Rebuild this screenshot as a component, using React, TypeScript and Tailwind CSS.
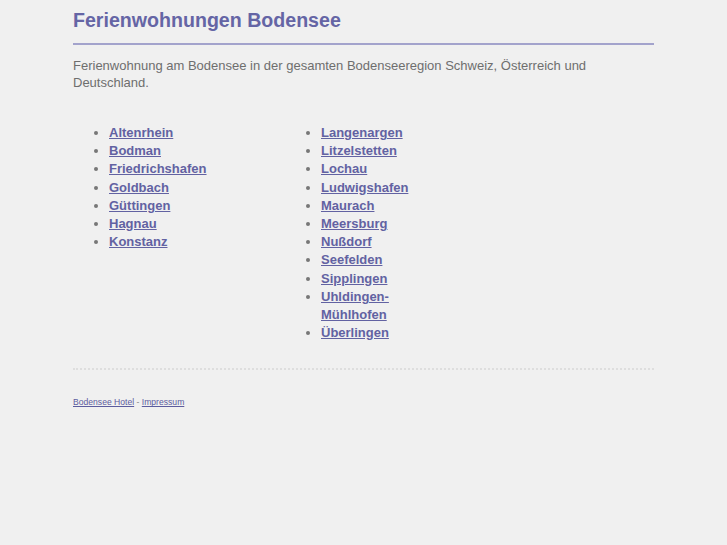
import React from "react";

const col1 = ["Altenrhein", "Bodman", "Friedrichshafen", "Goldbach", "Güttingen", "Hagnau", "Konstanz"];
const col2 = ["Langenargen", "Litzelstetten", "Lochau", "Ludwigshafen", "Maurach", "Meersburg", "Nußdorf", "Seefelden", "Sipplingen", "Uhldingen-Mühlhofen", "Überlingen"];

export default function App() {
  return (
    <div className="min-h-[545px] bg-[#f0f0f0] text-[#6e6e6e]" style={{ fontFamily: '"Liberation Sans", Arial, sans-serif' }}>
      <div className="ml-[73px] w-[581px] pt-[8px]">
        <h1 className="text-[19.6px] leading-[24px] font-bold text-[#6565a5] pb-[11px] border-b-2 border-[#a3a3cc]">
          Ferienwohnungen Bodensee
        </h1>
        <p className="mt-[12px] text-[13px] leading-[17px] text-[#6e6e6e]">
          Ferienwohnung am Bodensee in der gesamten Bodenseeregion Schweiz, Österreich und Deutschland.
        </p>
        <div className="mt-[33px] flex">
          <ul className="w-[212px] pl-[36px] list-disc marker:text-[#777777] text-[13px] leading-[18.2px] font-bold">
            {col1.map((n) => (
              <li key={n}>
                <a href="#" className="text-[#6262a2] underline">{n}</a>
              </li>
            ))}
          </ul>
          <ul className="w-[156px] pl-[36px] list-disc marker:text-[#777777] text-[13px] leading-[18.2px] font-bold">
            {col2.map((n) => (
              <li key={n}>
                <a href="#" className="text-[#6262a2] underline">{n}</a>
              </li>
            ))}
          </ul>
        </div>
        <div className="mt-[26px] border-t-2 border-dotted border-[#dedede]" />
        <div className="mt-[26px] text-[8.6px] leading-[12px] text-[#888888]">
          <a href="#" className="text-[#5c5c9e] underline">Bodensee Hotel</a> - <a href="#" className="text-[#5c5c9e] underline">Impressum</a>
        </div>
      </div>
    </div>
  );
}
